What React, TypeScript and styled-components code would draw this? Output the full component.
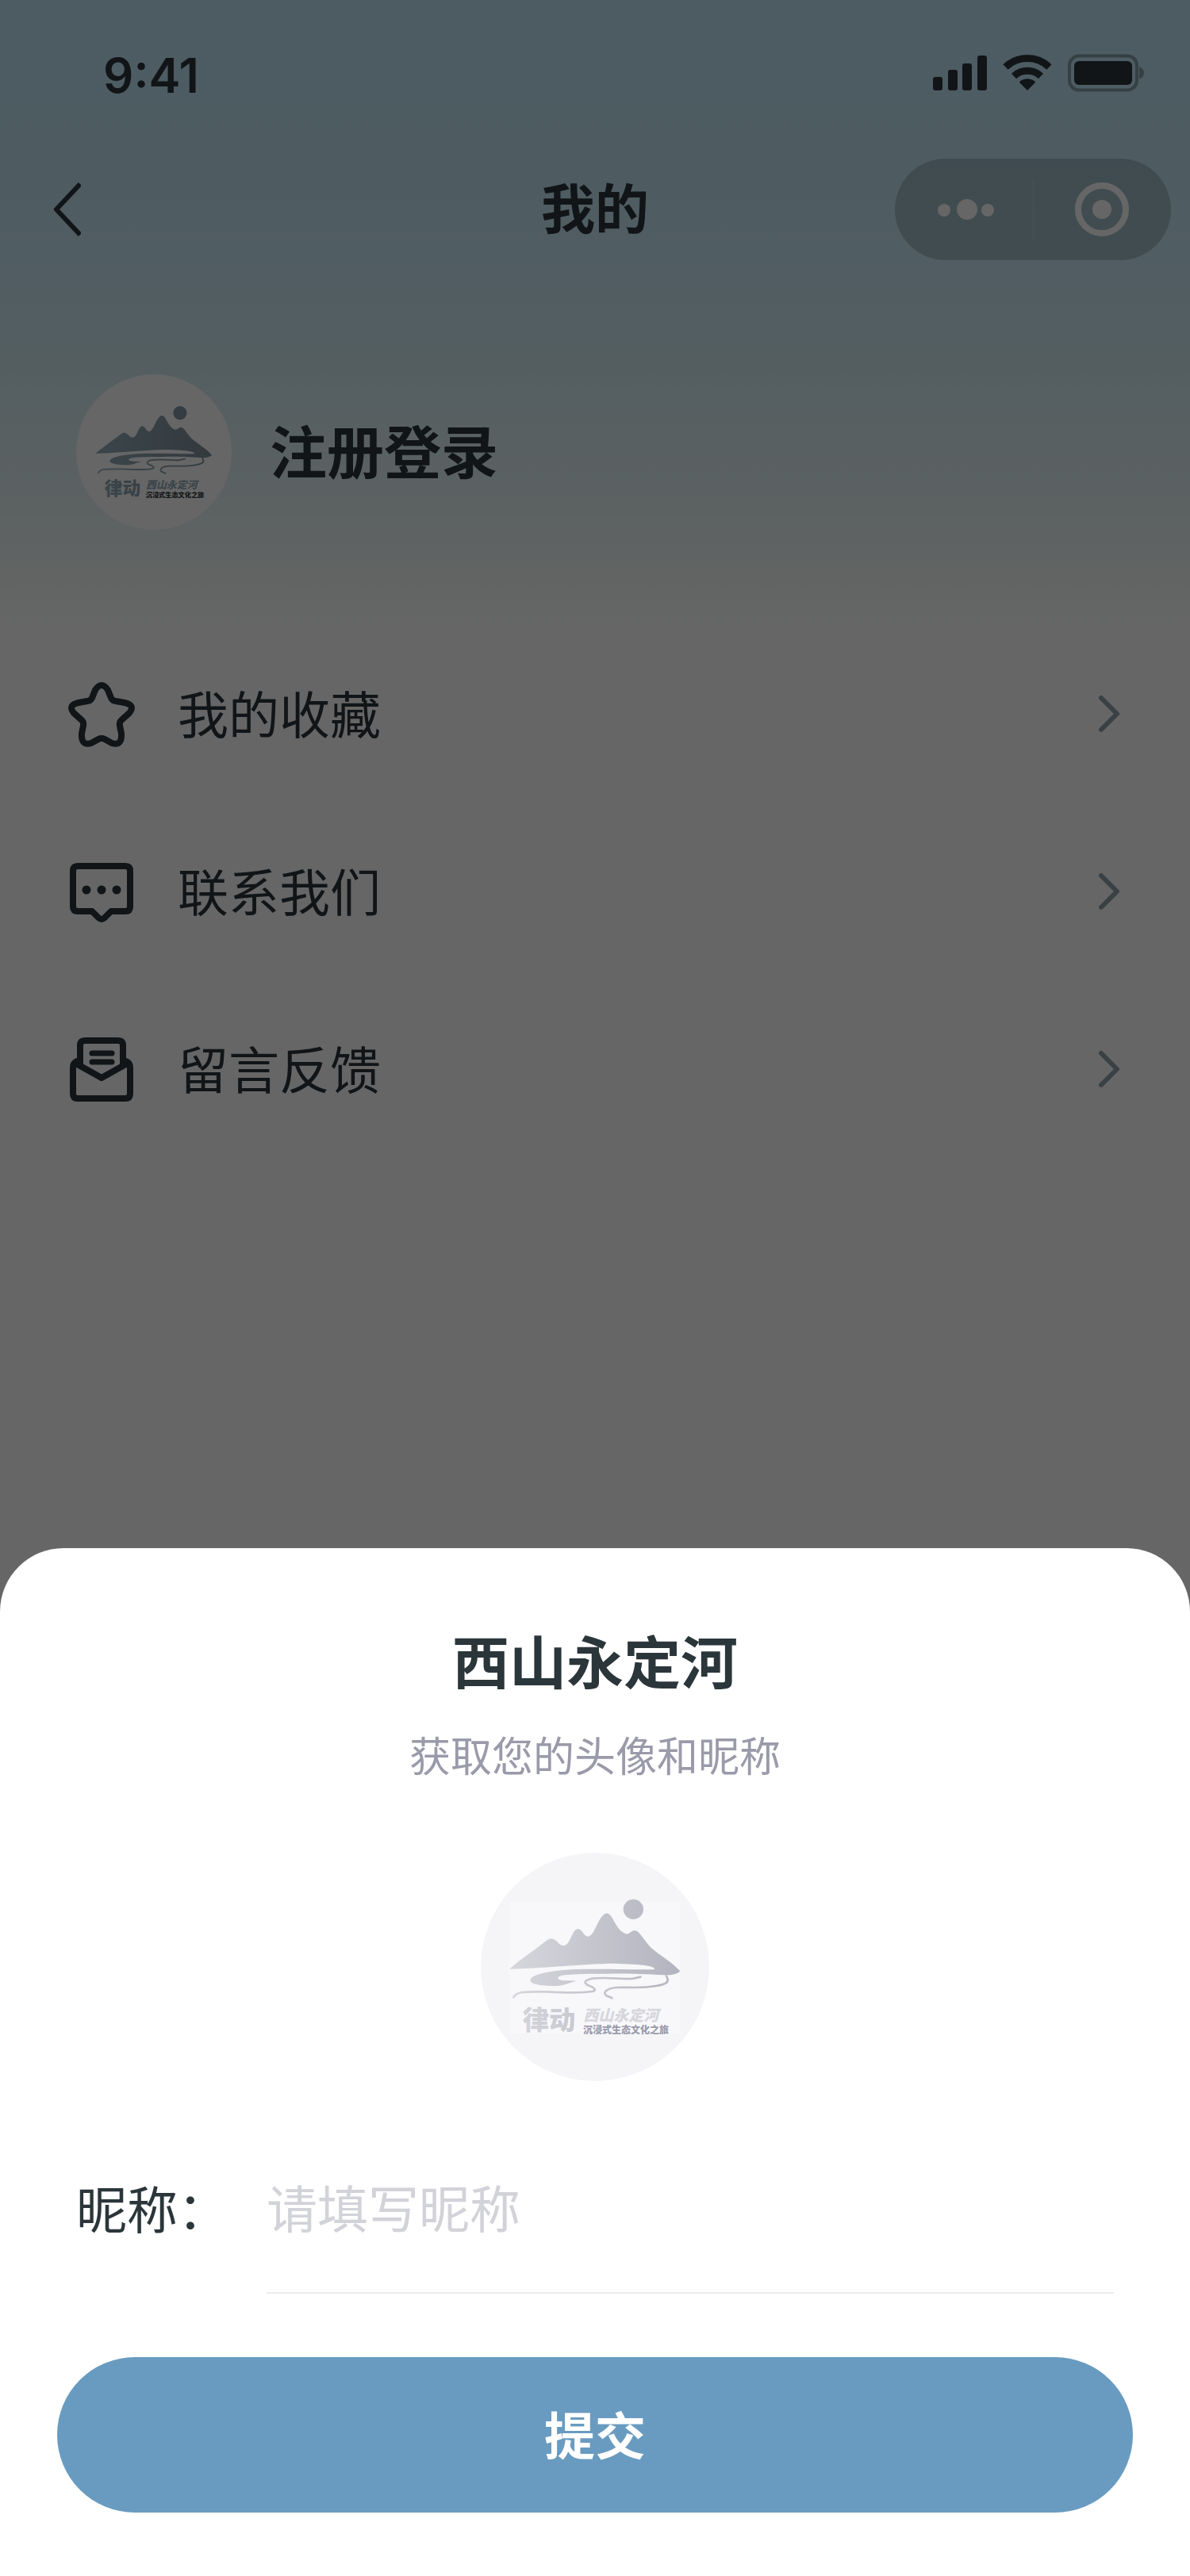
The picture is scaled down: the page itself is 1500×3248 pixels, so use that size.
import React, { useId, useState } from "react";
import styled, { createGlobalStyle } from "styled-components";

const ink = "#2b363a";

const GlobalStyle = createGlobalStyle`
  *, *::before, *::after { box-sizing: border-box; }
  body {
    margin: 0;
    background: #fff;
    color: ${ink};
    font-family: "Noto Sans CJK SC", sans-serif;
  }
  button, input { font: inherit; color: inherit; }
  button { border: 0; padding: 0; background: none; cursor: pointer; }
  svg { display: block; flex: none; }
`;

const Screen = styled.main`
  min-height: 100vh;
  background: linear-gradient(
    #c1e6f7 0,
    #c2e6f6 200px,
    #c9e8f5 330px,
    #cfeaf2 430px,
    #e6f4f4 640px,
    #f3f9f8 720px,
    #fff 800px
  );
`;

const StatusBar = styled.div`
  display: flex;
  align-items: center;
  justify-content: space-between;
  height: 176px;
  padding: 56px 56px 48px 130px;
`;

const Clock = styled.time`
  padding-top: 6px;
  font: 600 60px/72px Inter, sans-serif;
`;

const StatusIcons = styled.div`
  display: flex;
  gap: 20px;
`;

const NavBar = styled.header`
  display: grid;
  grid-template-columns: 1fr auto 1fr;
  align-items: center;
  height: 176px;
  padding: 0 24px;
`;

const BackButton = styled.button`
  justify-self: start;
  padding: 16px 42px;
`;

const PageTitle = styled.h1`
  margin: 0;
  padding-bottom: 8px;
  font-size: 68px;
  line-height: 96px;
  font-weight: 700;
`;

const Capsule = styled.div`
  justify-self: end;
  display: flex;
  align-items: center;
  width: 348px;
  height: 128px;
  border-radius: 64px;
  background: rgba(0, 0, 0, 0.18);
  color: #fff;
`;

const CapsuleButton = styled.button`
  flex: 1;
  display: grid;
  place-items: center;
  height: 100%;
`;

const CapsuleDivider = styled.span`
  width: 1px;
  height: 76px;
  background: rgba(255, 255, 255, 0.25);
`;

const Profile = styled.section`
  display: flex;
  align-items: center;
  gap: 48px;
  padding: 120px 96px;
`;

const LoginButton = styled.button`
  padding-bottom: 8px;
  font-size: 72px;
  line-height: 100px;
  font-weight: 700;
`;

const Avatar = styled.div<{ $size: number; $fill: string }>`
  width: ${(p) => p.$size}px;
  height: ${(p) => p.$size}px;
  border-radius: 50%;
  overflow: hidden;
  background: ${(p) => p.$fill};
`;

const Menu = styled.nav`
  display: flex;
  flex-direction: column;
`;

const MenuRow = styled.a`
  display: flex;
  align-items: center;
  gap: 48px;
  height: 224px;
  padding: 0 80px;
  color: inherit;
  font-size: 64px;
  line-height: 96px;
  text-decoration: none;
`;

const MenuLabel = styled.span`
  flex: 1;
  padding-bottom: 6px;
`;

const Mask = styled.div`
  position: fixed;
  inset: 0;
  display: flex;
  align-items: flex-end;
  background: rgba(0, 0, 0, 0.6);
`;

const Sheet = styled.form`
  flex: 1;
  display: flex;
  flex-direction: column;
  align-items: center;
  padding: 90px 72px 80px;
  border-radius: 80px 80px 0 0;
  background: #fff;
`;

const SheetTitle = styled.h2`
  margin: 0;
  font-size: 72px;
  line-height: 100px;
  font-weight: 700;
`;

const SheetHint = styled.p`
  margin: 32px 0 86px;
  color: #9a9aaa;
  font-size: 52px;
  line-height: 76px;
`;

const AvatarButton = styled.button`
  border-radius: 50%;
`;

const Field = styled.div`
  align-self: stretch;
  display: flex;
  margin: 56px 24px 80px;
  font-size: 64px;
`;

const FieldLabel = styled.label`
  width: 240px;
  line-height: 204px;
  white-space: nowrap;
`;

const NameInput = styled.input`
  flex: 1;
  min-width: 0;
  height: 212px;
  padding: 0 0 8px;
  border: 0;
  border-bottom: 2px solid #ebebee;
  background: none;
  outline: 0;
  &::placeholder { color: #d2d2d9; opacity: 1; }
`;

const SubmitButton = styled.button`
  align-self: stretch;
  height: 196px;
  padding-bottom: 6px;
  border-radius: 98px;
  background: #699bc0;
  color: #fff;
  font-size: 64px;
  font-weight: 700;
`;

function Signal() {
  return (
    <svg width="68" height="48" viewBox="0 0 68 48" fill="currentColor" aria-hidden="true">
      <rect x="0" y="29" width="12" height="17" rx="3" />
      <rect x="19" y="20" width="12" height="26" rx="3" />
      <rect x="37" y="12" width="12" height="34" rx="3" />
      <rect x="56" y="2" width="12" height="44" rx="3" />
    </svg>
  );
}

function Wifi() {
  return (
    <svg width="62" height="48" viewBox="0 0 62 48" fill="none" stroke="currentColor" strokeWidth="9" aria-hidden="true">
      <path d="M3.500 16.500A40 40 0 0 1 58.500 16.500" />
      <path d="M14 28A25 25 0 0 1 48 28" />
      <path d="M31 46L21.500 36.500Q20.500 35 22 34Q31 28.500 40 34Q41.500 35 40.500 36.500Z" fill="currentColor" stroke="none" />
    </svg>
  );
}

function Battery() {
  return (
    <svg width="98" height="48" viewBox="0 0 98 48" fill="currentColor" aria-hidden="true">
      <rect x="2" y="2.500" width="85" height="43" rx="12" fill="none" stroke="currentColor" strokeWidth="4" opacity="0.4" />
      <rect x="8" y="9" width="73" height="30" rx="6" />
      <path d="M90 16Q96 19 96 24Q96 29 90 32Z" opacity="0.4" />
    </svg>
  );
}

function StarIcon() {
  return (
    <svg width="96" height="96" viewBox="0 0 96 96" fill="none" stroke="currentColor" strokeWidth="8" strokeLinejoin="round" aria-hidden="true">
      <path transform="translate(0 1)" d="M40 17Q48 5 56 17L60 27Q62 31 66 31L77 33Q91 36 83 46L73 55Q70 58 71 62L73 72Q74 88 61 84L52 79Q48 77 44 79L35 84Q22 88 23 72L25 62Q26 58 23 55L13 46Q5 36 19 33L30 31Q34 31 36 27Z" />
    </svg>
  );
}

function ChatIcon() {
  return (
    <svg width="96" height="96" viewBox="0 0 96 96" fill="none" stroke="currentColor" strokeWidth="8" strokeLinejoin="round" aria-hidden="true">
      <g transform="translate(0 1)">
        <path d="M18 15H78Q84 15 84 21V66Q84 72 78 72H60L52 80Q48 84 44 80L36 72H18Q12 72 12 66V21Q12 15 18 15Z" />
        <g fill="currentColor" stroke="none">
          <circle cx="29" cy="45" r="5.500" />
          <circle cx="48" cy="45" r="5.500" />
          <circle cx="67" cy="45" r="5.500" />
        </g>
      </g>
    </svg>
  );
}

function MailIcon() {
  return (
    <svg width="96" height="96" viewBox="0 0 96 96" fill="none" stroke="currentColor" strokeWidth="8" strokeLinejoin="round" aria-hidden="true">
      <g transform="translate(0 1)">
        <path d="M21 36Q12 38 12 45V78Q12 84 18 84H78Q84 84 84 78V45Q84 38 75 36" />
        <path d="M21 44V17Q21 11 27 11H69Q75 11 75 17V44" />
        <path d="M14 39L48 58L82 39" />
        <path d="M36 27H61M36 38H61" strokeWidth="7" strokeLinecap="round" />
      </g>
    </svg>
  );
}

function Chevron() {
  return (
    <svg width="48" height="48" viewBox="0 0 48 48" fill="none" stroke="#8fa3ad" strokeWidth="6" strokeLinecap="round" strokeLinejoin="round" aria-hidden="true">
      <path d="M16 4L36 24L16 44" />
    </svg>
  );
}

interface LogoProps {
  from: string;
  to: string;
  strong: string;
  panel?: string;
}

function Logo({ from, to, strong, panel }: LogoProps) {
  const id = useId();
  const paint = `url(#${id})`;
  return (
    <svg width="100%" height="100%" viewBox="78 78 864 864" aria-hidden="true">
      <defs>
        <linearGradient id={id} gradientUnits="userSpaceOnUse" x1="186" y1="0" x2="832" y2="0">
          <stop offset="0" stopColor={from} />
          <stop offset="1" stopColor={to} />
        </linearGradient>
      </defs>
      {panel && <rect x="186" y="262" width="646" height="500" fill={panel} />}
      <circle cx="655" cy="292" r="38" fill={paint} />
      <path
        fill={paint}
        d="M186 518C230 480 290 440 330 408Q346 396 362 410C375 422 382 432 396 428C412 424 420 390 432 374Q445 358 460 374C470 388 478 398 488 394C505 388 515 350 532 325Q556 290 575 325C590 350 600 375 625 384C640 390 645 372 660 372C680 374 690 405 725 440C760 470 800 490 832 526C820 540 790 543 770 541C700 538 640 535 560 536C470 536 375 536 370 550C368 566 405 560 440 563C400 572 400 582 350 582C290 580 265 572 265 560C268 535 360 523 430 519C520 516 640 520 735 520C738 506 690 500 580 497C450 499 320 515 186 518Z"
      />
      <g fill="none" stroke={paint} strokeWidth="8" strokeLinecap="round">
        <path d="M202 625C215 600 250 605 330 604C400 608 450 610 500 603C520 598 505 588 485 580C465 570 470 560 500 554C550 548 600 556 650 555L682 548" />
        <path d="M780 545C792 565 785 575 740 582C690 592 640 586 590 588C550 592 540 608 552 618L574 628" />
      </g>
      <g fontFamily='"Noto Sans CJK SC", sans-serif' fontWeight="900">
        <text x="236" y="747" fontSize="100" fill={paint}>律动</text>
        <text x="466" y="713" fontSize="57" fontStyle="italic" fill={from}>西山永定河</text>
        <text x="465" y="763" fontSize="36" fill={strong}>沉浸式生态文化之旅</text>
      </g>
    </svg>
  );
}

const menuItems = [
  { label: "我的收藏", href: "#favorites", Icon: StarIcon },
  { label: "联系我们", href: "#contact", Icon: ChatIcon },
  { label: "留言反馈", href: "#feedback", Icon: MailIcon },
];

export default function App() {
  const [name, setName] = useState("");

  return (
    <>
      <GlobalStyle />
      <Screen>
        <StatusBar>
          <Clock>9:41</Clock>
          <StatusIcons>
            <Signal />
            <Wifi />
            <Battery />
          </StatusIcons>
        </StatusBar>
        <NavBar>
          <BackButton type="button" aria-label="返回">
            <svg width="36" height="72" viewBox="0 0 36 72" fill="none" stroke="currentColor" strokeWidth="6" strokeLinejoin="round" aria-hidden="true">
              <path d="M35 4L5 36L35 68" />
            </svg>
          </BackButton>
          <PageTitle>我的</PageTitle>
          <Capsule>
            <CapsuleButton type="button" aria-label="更多">
              <svg width="76" height="28" viewBox="0 0 76 28" fill="currentColor" aria-hidden="true">
                <circle cx="13" cy="15" r="8" />
                <circle cx="42" cy="14" r="13" />
                <circle cx="68" cy="15" r="8" />
              </svg>
            </CapsuleButton>
            <CapsuleDivider />
            <CapsuleButton type="button" aria-label="关闭">
              <svg width="68" height="68" viewBox="0 0 68 68" fill="currentColor" aria-hidden="true">
                <circle cx="34" cy="34" r="30" fill="none" stroke="currentColor" strokeWidth="8" />
                <circle cx="34" cy="34" r="12" />
              </svg>
            </CapsuleButton>
          </Capsule>
        </NavBar>
        <Profile>
          <Avatar $size={196} $fill="#fff">
            <Logo from="#93adbb" to="#7f919c" strong="#303a40" />
          </Avatar>
          <LoginButton type="button">注册登录</LoginButton>
        </Profile>
        <Menu>
          {menuItems.map(({ label, href, Icon }) => (
            <MenuRow key={href} href={href}>
              <Icon />
              <MenuLabel>{label}</MenuLabel>
              <Chevron />
            </MenuRow>
          ))}
        </Menu>
      </Screen>
      <Mask>
        <Sheet role="dialog" aria-labelledby="sheet-title" onSubmit={(e) => e.preventDefault()}>
          <SheetTitle id="sheet-title">西山永定河</SheetTitle>
          <SheetHint>获取您的头像和昵称</SheetHint>
          <AvatarButton type="button" aria-label="选择头像">
            <Avatar $size={288} $fill="#f5f5f8">
              <Logo from="#d6d6dc" to="#b4b4c0" strong="#9a9aaa" panel="#f8f8fa" />
            </Avatar>
          </AvatarButton>
          <Field>
            <FieldLabel htmlFor="nickname">昵称：</FieldLabel>
            <NameInput
              id="nickname"
              placeholder="请填写昵称"
              value={name}
              onChange={(e) => setName(e.target.value)}
            />
          </Field>
          <SubmitButton type="submit">提交</SubmitButton>
        </Sheet>
      </Mask>
    </>
  );
}
